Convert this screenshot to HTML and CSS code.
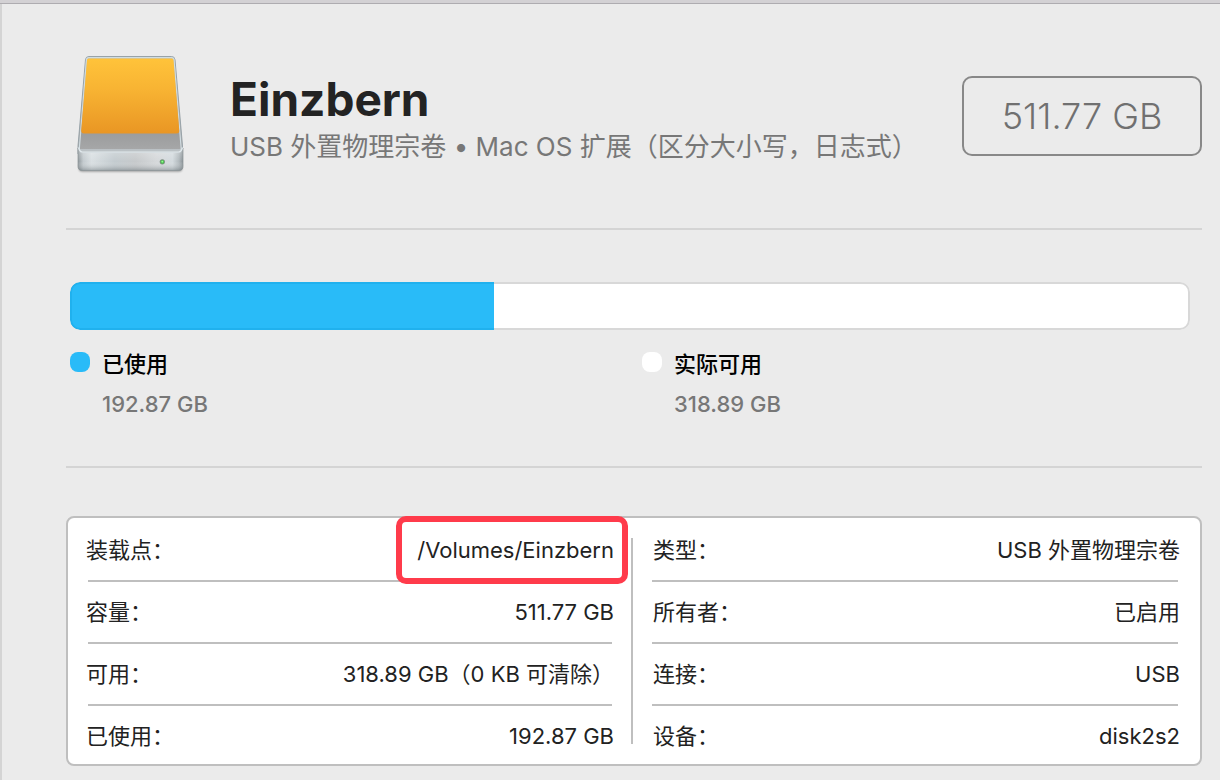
FILE: index.html
```html
<!DOCTYPE html>
<html lang="zh-CN">
<head>
<meta charset="utf-8">
<meta name="viewport" content="width=device-width, initial-scale=1">
<title>Einzbern</title>
<link rel="stylesheet" href="styles.css">
</head>
<body>
<div class="toolbar-edge"></div>
<main class="volume">
  <header class="volume-header">
    <svg class="drive-icon" viewBox="66 55 128 124" role="img" aria-label="外置磁盘">
      <defs>
        <linearGradient id="label" x1="0" y1="0" x2="0" y2="1"><stop offset="0" stop-color="#ffc33a"/><stop offset=".4" stop-color="#f8b433"/><stop offset="1" stop-color="#e99624"/></linearGradient>
        <linearGradient id="top" x1="0" y1="0" x2="0" y2="1"><stop offset="0" stop-color="#b9c4ca"/><stop offset=".8" stop-color="#9c9d9e"/><stop offset="1" stop-color="#a9aaab"/></linearGradient>
        <linearGradient id="front" x1="0" y1="0" x2="1" y2="0"><stop offset="0" stop-color="#8f979b"/><stop offset=".05" stop-color="#c3cace"/><stop offset=".13" stop-color="#d9dfe2"/><stop offset=".35" stop-color="#c3cbcf"/><stop offset=".55" stop-color="#c6c9cb"/><stop offset=".75" stop-color="#d5d8da"/><stop offset=".9" stop-color="#d3dade"/><stop offset=".96" stop-color="#b2babe"/><stop offset="1" stop-color="#8c9498"/></linearGradient>
        <linearGradient id="shade" x1="0" y1="0" x2="0" y2="1"><stop offset="0" stop-color="#fff" stop-opacity=".3"/><stop offset=".6" stop-color="#fff" stop-opacity="0"/><stop offset="1" stop-color="#5d676c" stop-opacity=".45"/></linearGradient>
        <filter id="soft" x="-10%" y="-100%" width="120%" height="300%"><feGaussianBlur stdDeviation="1.2"/></filter>
      </defs>
      <rect x="79" y="164" width="103" height="7.500" rx="3" fill="#000" opacity=".4" filter="url(#soft)"/>
      <path d="M89 56.500H171.500Q174.700 56.500 175 59.700L182.500 146V154H78V146L85.500 59.700Q85.800 56.500 89 56.500Z" fill="url(#top)" stroke="#98a3a9" stroke-width="1"/>
      <path d="M89 57.700H171.500Q173.800 57.700 174 60L181.300 150H79.200L86.500 60Q86.700 57.700 89 57.700Z" fill="none" stroke="#d0dce1" stroke-width="1.200"/>
      <path d="M88.500 58.500H172Q173.300 58.500 173.500 60L179.300 130.500Q179.500 133.500 176.500 133.500H84Q81 133.500 81.200 130.500L87 60Q87.200 58.500 88.500 58.500Z" fill="url(#label)"/>
      <path d="M78 148Q79 152 82 152H179Q182 152 183 148V166Q183 170.500 179 170.500H82Q78 170.500 78 166Z" fill="url(#front)"/>
      <path d="M78 148Q79 152 82 152H179Q182 152 183 148V166Q183 170.500 179 170.500H82Q78 170.500 78 166Z" fill="url(#shade)" stroke="#8b9397" stroke-width=".7"/>
      <path d="M78.600 147.500Q79.500 152 82.500 152H178.500Q181.500 152 182.400 147.500" fill="none" stroke="#dfe7eb" stroke-width="1.400"/>
      <circle cx="162.300" cy="161.800" r="2.600" fill="#7d8a80"/>
      <circle cx="162.300" cy="161.800" r="1.900" fill="#4cc552"/>
      <circle cx="162.300" cy="161.600" r=".9" fill="#9af593"/>
    </svg>
    <div class="volume-title">
      <h1 class="volume-name">Einzbern</h1>
      <p class="volume-kind">USB 外置物理宗卷 • Mac OS 扩展（区分大小写，日志式）</p>
    </div>
    <div class="volume-size">511.77 GB</div>
  </header>

  <section class="usage">
    <div class="usage-bar" role="img" aria-label="已使用 192.87 GB，实际可用 318.89 GB">
      <div class="usage-fill" style="width: 37.9%"></div>
    </div>
    <ul class="legend">
      <li class="legend-item">
        <span class="swatch swatch-used"></span>
        <div><div class="legend-name">已使用</div><div class="legend-value">192.87 GB</div></div>
      </li>
      <li class="legend-item">
        <span class="swatch swatch-free"></span>
        <div><div class="legend-name">实际可用</div><div class="legend-value">318.89 GB</div></div>
      </li>
    </ul>
  </section>

  <section class="details">
    <dl class="detail-list">
      <div class="detail-row"><dt>装载点：</dt><dd class="marked">/Volumes/Einzbern</dd></div>
      <div class="detail-row"><dt>容量：</dt><dd>511.77 GB</dd></div>
      <div class="detail-row"><dt>可用：</dt><dd>318.89 GB（0 KB 可清除）</dd></div>
      <div class="detail-row"><dt>已使用：</dt><dd>192.87 GB</dd></div>
    </dl>
    <div class="detail-divider"></div>
    <dl class="detail-list detail-list-end">
      <div class="detail-row"><dt>类型：</dt><dd>USB 外置物理宗卷</dd></div>
      <div class="detail-row"><dt>所有者：</dt><dd>已启用</dd></div>
      <div class="detail-row"><dt>连接：</dt><dd>USB</dd></div>
      <div class="detail-row"><dt>设备：</dt><dd>disk2s2</dd></div>
    </dl>
  </section>
</main>
</body>
</html>
```
FILE: styles.css
```css
* { box-sizing: border-box; }

body {
  margin: 0;
  min-height: 100vh;
  display: flex;
  flex-direction: column;
  background: #ebebeb;
  color: #222;
  font: 22px/32px Inter, "Noto Sans CJK SC", sans-serif;
}

h1, p, ul, dl, dd { margin: 0; padding: 0; }

.toolbar-edge {
  height: 4px;
  background: #d3d1d4;
  border-bottom: 1px solid #aeacb0;
}

.volume {
  flex: 1;
  padding: 0 18px 14px 64px;
  border-left: 2px solid #d4d4d4;
}

.volume-header {
  display: flex;
  align-items: center;
  padding: 51px 0 49px;
  border-bottom: 2px solid #d4d4d4;
}

.drive-icon {
  flex: none;
  width: 128px;
  height: 124px;
  margin-right: 36px;
}

.volume-title { flex: 1; }

.volume-name {
  font-size: 46px;
  line-height: 60px;
  font-weight: 700;
  color: #232323;
}

.volume-kind {
  font-size: 26px;
  line-height: 36px;
  color: #777;
}

.volume-size {
  flex: none;
  width: 240px;
  margin-bottom: 2px;
  border: 2px solid #888;
  border-radius: 10px;
  text-align: center;
  font-size: 36px;
  line-height: 76px;
  font-weight: 300;
  color: #707070;
}

.usage {
  padding: 52px 12px 46px 4px;
  border-bottom: 2px solid #d4d4d4;
}

.usage-bar {
  height: 48px;
  border-radius: 10px;
  overflow: hidden;
  background: #fff;
  box-shadow: inset 0 0 0 2px #d8d8d8;
}

.usage-fill {
  height: 100%;
  background: #29bbf8;
  border: 2px solid #20b1ee;
  border-right: 0;
  border-radius: 10px 0 0 10px;
}

.legend {
  display: grid;
  grid-template-columns: 1fr 1fr;
  gap: 24px;
  padding-top: 18px;
  list-style: none;
}

.legend-item {
  display: flex;
  gap: 12px;
}

.swatch {
  width: 20px;
  height: 20px;
  margin-top: 4px;
  border-radius: 8px;
}

.swatch-used { background: #29bbf8; }
.swatch-free { background: #fff; }

.legend-name {
  padding-bottom: 8px;
  font-weight: 500;
  color: #000;
}

.legend-value {
  font-weight: 450;
  color: #777;
}

.details {
  display: grid;
  grid-template-columns: 262fr 2px 263fr;
  column-gap: 19px;
  margin-top: 48px;
  padding: 0 22px 0 20px;
  background: #fff;
  border: 2px solid #bfbfbf;
  border-radius: 8px;
}

.detail-divider {
  margin: 20px 0;
  background: #bfbfbf;
}

.detail-row {
  display: flex;
  justify-content: space-between;
  line-height: 60px;
}

.detail-row:first-child { padding-top: 2px; }

.detail-row:last-child { height: 58px; }

.detail-row:not(:last-child) { border-bottom: 2px solid #bfbfbf; }

.detail-row dt { margin-left: -2px; }
.detail-row dd { margin-right: -2px; }

.detail-list-end dt { margin-left: 1px; }

/* Red frame drawn over the mount point */
.marked { position: relative; }

.marked::after {
  content: "";
  position: absolute;
  inset: -4px -14px -4px -21px;
  border: 6px solid #ff3b4b;
  border-radius: 10px;
}
```
